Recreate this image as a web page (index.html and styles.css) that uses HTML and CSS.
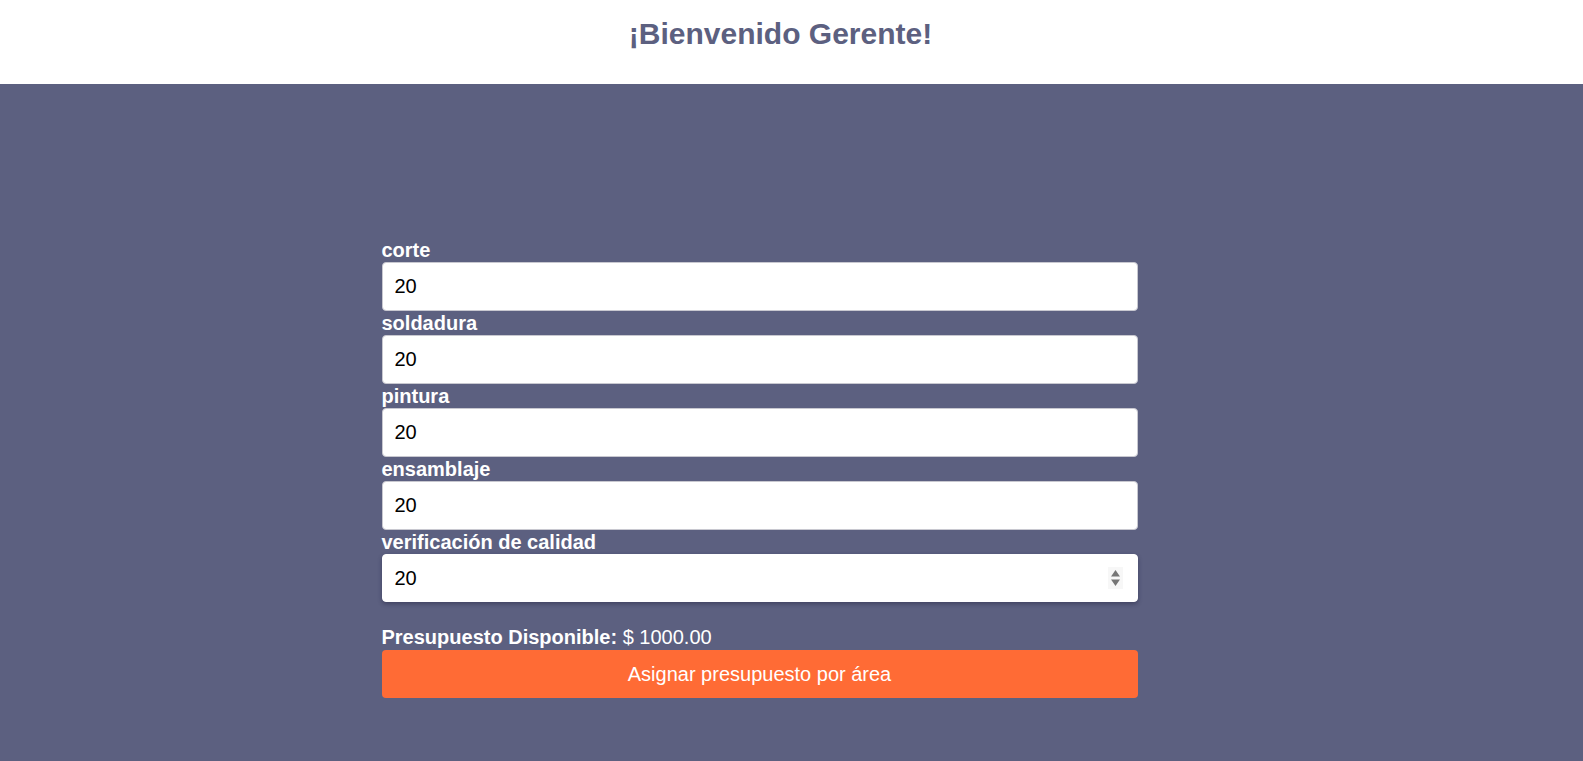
FILE: index.html
```html
<!DOCTYPE html>
<html lang="es">
<head>
<meta charset="utf-8">
<title>Gerente</title>
<link rel="stylesheet" href="styles.css">
</head>
<body>
<header class="topbar">
  <h1 class="title">¡Bienvenido Gerente!</h1>
</header>
<main class="main">
  <form class="budget-form">
    <label class="field-label" for="corte">corte</label>
    <input class="field-input" id="corte" type="text" value="20">
    <label class="field-label" for="soldadura">soldadura</label>
    <input class="field-input" id="soldadura" type="text" value="20">
    <label class="field-label" for="pintura">pintura</label>
    <input class="field-input" id="pintura" type="text" value="20">
    <label class="field-label" for="ensamblaje">ensamblaje</label>
    <input class="field-input" id="ensamblaje" type="text" value="20">
    <label class="field-label" for="calidad">verificación de calidad</label>
    <div class="number-wrap">
      <input class="field-input field-number" id="calidad" type="number" value="20">
      <span class="spinner" aria-hidden="true">
        <svg width="15" height="22" viewBox="0 0 15 22">
          <rect x="0" y="0" width="15" height="22" fill="#f7f7f7"/>
          <polygon points="7.5,3 12,9.5 3,9.5" fill="#767676"/>
          <polygon points="3,12.5 12,12.5 7.5,19" fill="#767676"/>
        </svg>
      </span>
    </div>
    <p class="budget"><strong>Presupuesto Disponible:</strong> $ 1000.00</p>
    <button class="submit" type="button">Asignar presupuesto por área</button>
  </form>
</main>
</body>
</html>
```

FILE: styles.css
```css
* { box-sizing: border-box; }
html, body { margin: 0; height: 100%; }
body {
  font-family: "Liberation Sans", Arial, sans-serif;
  background: #5c6080;
  display: flex;
  flex-direction: column;
}
.topbar {
  background: #ffffff;
  height: 84px;
  padding: 16px 22px 0 0;
  display: flex;
  justify-content: center;
  flex-shrink: 0;
}
.title {
  margin: 0;
  font-size: 30px;
  line-height: 36px;
  font-weight: 700;
  color: #5c6080;
}
.main {
  flex: 1;
  display: flex;
  justify-content: center;
  padding: 154px 64px 0 0;
}
.budget-form {
  width: 756px;
  display: flex;
  flex-direction: column;
}
.field-label {
  color: #ffffff;
  font-weight: 700;
  font-size: 20px;
  line-height: 24px;
  height: 24px;
}
.field-input {
  height: 49px;
  border: 1px solid #c8c8d0;
  border-radius: 4px;
  background: #ffffff;
  padding: 0 12px;
  font-family: "Liberation Sans", Arial, sans-serif;
  font-size: 20px;
  color: #000000;
  outline: none;
}
.number-wrap {
  position: relative;
  display: flex;
  flex-direction: column;
}
.field-number {
  height: 48px;
  border-color: #ffffff;
  box-shadow: 0 2px 4px rgba(30, 32, 60, 0.45);
  padding-right: 36px;
  -moz-appearance: textfield;
}
.field-number::-webkit-inner-spin-button,
.field-number::-webkit-outer-spin-button {
  -webkit-appearance: none;
  margin: 0;
}
.spinner {
  position: absolute;
  right: 15px;
  top: 13px;
  width: 15px;
  height: 22px;
  display: flex;
}
.budget {
  margin: 24px 0 0;
  color: #ffffff;
  font-size: 20px;
  line-height: 23px;
}
.submit {
  margin-top: 1px;
  height: 48px;
  border: none;
  border-radius: 4px;
  background: #ff6b35;
  color: #ffffff;
  font-family: "Liberation Sans", Arial, sans-serif;
  font-size: 20px;
  cursor: pointer;
}
```
